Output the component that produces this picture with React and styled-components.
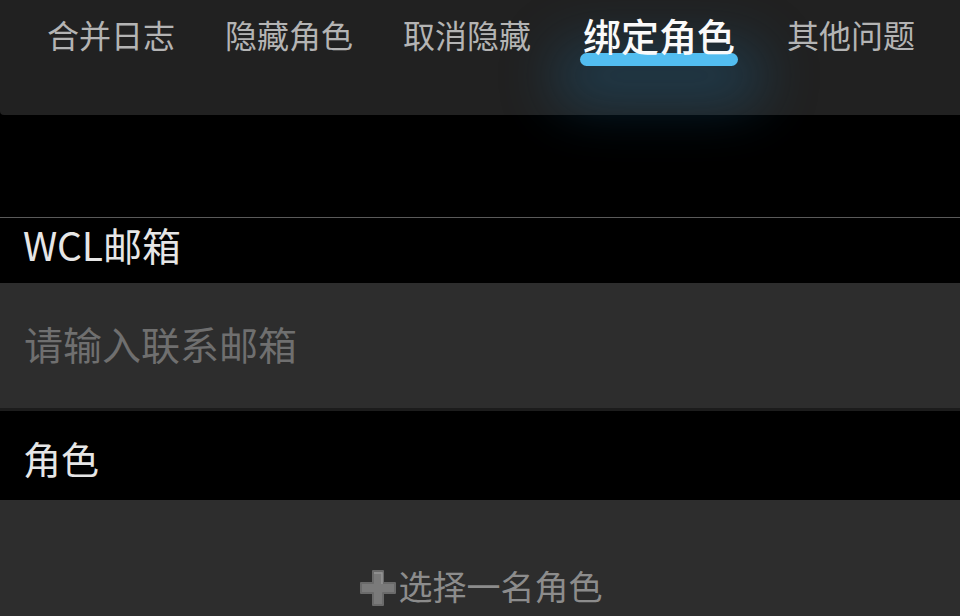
import React, {useState} from 'react';
import styled, {createGlobalStyle} from 'styled-components';

const GlobalStyle = createGlobalStyle`
  html, body {
    margin: 0;
    padding: 0;
    background: #000;
  }
  body {
    font-family: "Noto Sans CJK SC", "Noto Sans", sans-serif;
    overflow: hidden;
  }
`;

const Page = styled.div`
  width: 960px;
  height: 616px;
  background: #000;
  overflow: hidden;
`;

const TabBar = styled.nav`
  position: relative;
  display: flex;
  align-items: flex-start;
  gap: 50px;
  height: 115px;
  padding: 0 0 0 47px;
  box-sizing: border-box;
  background: #212121;
  border-bottom-left-radius: 4px;
  z-index: 1;
`;

const Tab = styled.div`
  position: relative;
  display: flex;
  flex-direction: column;
  align-items: center;
  height: 74px;
  margin: ${(p) => (p.$active ? '0 2px' : '0')};
  padding-top: ${(p) => (p.$active ? '12px' : '15px')};
  box-sizing: border-box;
  font-size: ${(p) => (p.$active ? '38px' : '32px')};
  font-weight: ${(p) => (p.$active ? 500 : 400)};
  line-height: 1.2;
  color: ${(p) => (p.$active ? '#fafafa' : '#b4b4b4')};
  white-space: nowrap;
  cursor: pointer;
`;

// 选中标签下方的蓝色指示条，带光晕
const Indicator = styled.span`
  position: absolute;
  left: -3px;
  right: -3px;
  top: 53px;
  height: 13px;
  border-radius: 7px;
  background: #52bdf0;
  box-shadow: 0 16px 55px 24px rgba(30, 110, 160, 0.34);
  z-index: -1;
`;

const Gap = styled.div`
  height: 102px;
  border-bottom: 1px solid #5a5a5a;
`;

const Label = styled.div`
  display: flex;
  align-items: center;
  height: ${(p) => p.$h}px;
  padding: ${(p) => p.$top || 0}px 0 ${(p) => p.$bottom || 0}px 23px;
  box-sizing: border-box;
  font-size: ${(p) => p.$size || 38}px;
  color: #e6e6e6;
`;

const Input = styled.input`
  display: block;
  width: 100%;
  height: 128px;
  padding: 0 24px 6px;
  box-sizing: border-box;
  border: none;
  border-bottom: 3px solid #1c1c1c;
  outline: none;
  background: #2d2d2d;
  font-family: inherit;
  font-size: 39px;
  color: #e6e6e6;

  &::placeholder {
    color: #6f6f6f;
  }
`;

const Picker = styled.div`
  display: flex;
  justify-content: center;
  align-items: flex-end;
  height: 120px;
  margin-top: 3px;
  padding-bottom: 10px;
  box-sizing: border-box;
  background: #2d2d2d;
  font-size: 34px;
  color: #8c8c8c;
  cursor: pointer;
`;

const PlusIcon = styled.svg`
  width: 40px;
  height: 40px;
  margin: 0 1px 2px 0;
`;

const tabs = ['合并日志', '隐藏角色', '取消隐藏', '绑定角色', '其他问题'];

const App = () => {
    const [active, setActive] = useState(3);
    return (
        <Page>
            <GlobalStyle/>
            <TabBar>
                {tabs.map((t, i) => (
                    <Tab key={t} $active={i === active} onClick={() => setActive(i)}>
                        {t}
                        {i === active && <Indicator/>}
                    </Tab>
                ))}
            </TabBar>
            <Gap/>
            <Label $h={65} $bottom={14} $size={39}>WCL邮箱</Label>
            <Input placeholder="请输入联系邮箱"/>
            <Label $h={86} $top={6}>角色</Label>
            <Picker>
                <PlusIcon viewBox="0 0 40 40">
                    <path d="M15 3h10v12h12v10H25v12H15V25H3V15h12z" fill="#7a7a7a" stroke="#6a6a6a" strokeLinejoin="round" strokeWidth="2"/>
                    <path d="M16 5h8v11" fill="none" stroke="#959595" strokeWidth="1.5"/>
                </PlusIcon>
                选择一名角色
            </Picker>
        </Page>
    );
};

export default App;
